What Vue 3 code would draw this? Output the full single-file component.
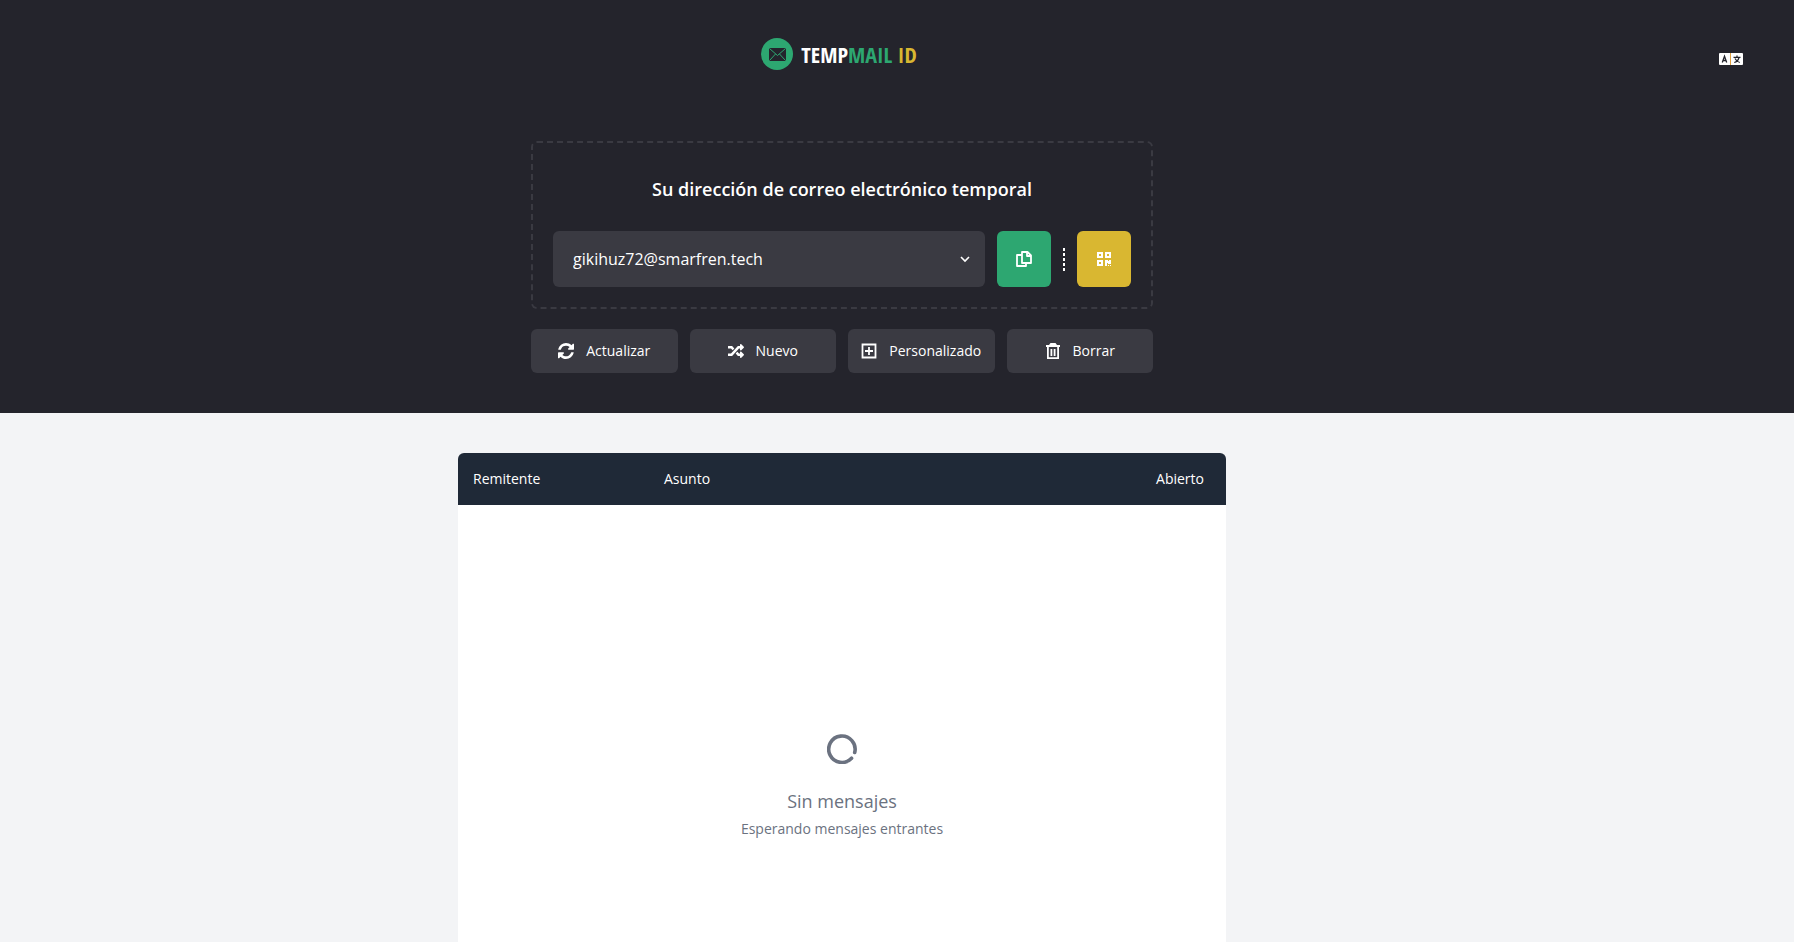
<template>
  <div class="page">
    <section class="hero">
      <header class="topbar">
        <a href="#" class="logo" aria-label="TEMPMAIL ID">
          <svg class="logo-mark" viewBox="0 0 32 32" aria-hidden="true">
            <circle cx="16" cy="16" r="16" fill="#2da771" />
            <rect x="8" y="10" width="17" height="13" rx="1" fill="#24242c" />
            <path d="M8.500 10.500l8 7 8-7M8.500 22.500l6-6.500M24.500 22.500l-6-6.500" fill="none" stroke="#2da771" stroke-width="1" />
          </svg>
          <span class="logo-text">TEMP<span class="green">MAIL</span> <span class="gold">ID</span></span>
        </a>
        <button class="lang" type="button" aria-label="Idioma">
          <svg viewBox="0 0 24 12" aria-hidden="true">
            <rect width="24" height="12" rx="1" fill="#fff" />
            <path d="M11.500 0v12" stroke="#e0a040" stroke-width="1" />
            <path d="M3.300 9.500L5.500 3.200l2.200 6.300M4 7.500h3" fill="none" stroke="#24242c" stroke-width="1.300" />
            <path d="M14.500 4.300h7M18 2.500v1.800M20 4.500c-.5 2.300-2.300 4.300-4.800 5M16 5.500c.8 1.800 2.400 3.300 4.800 4" fill="none" stroke="#24242c" stroke-width="1.200" />
          </svg>
        </button>
      </header>

      <div class="hero-body">
        <div class="address-box">
          <h1>Su dirección de correo electrónico temporal</h1>
          <div class="address-row">
            <div class="select-wrap">
              <select v-model="address" aria-label="Dirección de correo">
                <option v-for="item in addresses" :key="item" :value="item">{{ item }}</option>
              </select>
              <svg class="chevron" viewBox="0 0 10 10" aria-hidden="true">
                <path d="M1 3l4 4 4-4" fill="none" stroke="#fff" stroke-width="1.600" />
              </svg>
            </div>
            <button class="square copy" type="button" aria-label="Copiar">
              <svg viewBox="0 0 16 16" aria-hidden="true">
                <path d="M6 1h5.500L15 4.500V12H6zM11 1v4h4M5.500 4H1v11h9v-3" fill="none" stroke="#fff" stroke-width="1.800" stroke-linejoin="round" />
              </svg>
            </button>
            <span class="divider"></span>
            <button class="square qr" type="button" aria-label="Código QR">
              <svg viewBox="0 0 16 16" aria-hidden="true">
                <path fill="#fff" fill-rule="evenodd" d="M1 1h6v6H1zM3 3v2h2V3zM9 1h6v6H9zM11 3v2h2V3zM1 9h6v6H1zM3 11v2h2v-2zM9 9h3v1h1V9h2v4h-3v-1h-1v3H9zM12 14h1v1h-1zM14 14h1v1h-1z" />
              </svg>
            </button>
          </div>
        </div>

        <nav class="actions">
          <button v-for="action in actions" :key="action.label" type="button">
            <svg :viewBox="action.box" aria-hidden="true">
              <path v-if="action.fill" :d="action.fill" fill="#fff" />
              <path v-if="action.line" :d="action.line" fill="none" stroke="#fff" stroke-width="1.800" />
            </svg>
            <span>{{ action.label }}</span>
          </button>
        </nav>
      </div>
    </section>

    <main class="inbox">
      <table>
        <thead>
          <tr>
            <th class="sender">Remitente</th>
            <th>Asunto</th>
            <th class="open">Abierto</th>
          </tr>
        </thead>
        <tbody>
          <tr>
            <td colspan="3">
              <svg class="spinner" viewBox="0 0 30 30" aria-hidden="true">
                <path d="M24.600 24.200A13.200 13.200 0 1 1 27.700 18.500" fill="none" stroke="#6b7280" stroke-width="3.600" stroke-linecap="round" />
              </svg>
              <p class="empty-title">Sin mensajes</p>
              <p class="empty-text">Esperando mensajes entrantes</p>
            </td>
          </tr>
        </tbody>
      </table>
    </main>
  </div>
</template>

<script setup>
import { ref } from 'vue'

const addresses = ['gikihuz72@smarfren.tech']
const address = ref(addresses[0])

const actions = [
  {
    label: 'Actualizar',
    box: '0 0 1536 1536',
    fill: 'M1511 928q0 5-1 7-64 268-268 434.500T764 1536q-146 0-282.500-55T238 1324l-129 129q-19 19-45 19t-45-19-19-45V960q0-26 19-45t45-19h448q26 0 45 19t19 45-19 45l-137 137q71 66 161 102t187 36q134 0 250-65t186-179q11-17 53-117 8-23 30-23h192q13 0 22.500 9.500t9.500 22.500zM1536 128v448q0 26-19 45t-45 19h-448q-26 0-45-19t-19-45 19-45l138-138Q969 256 768 256q-134 0-250 65T332 500q-11 17-53 117-8 23-30 23H50q-13 0-22.500-9.500T18 608v-7q65-268 270-434.500T768 0q146 0 284 55.500T1297 212l130-129q19-19 45-19t45 19 19 45z'
  },
  {
    label: 'Nuevo',
    box: '0 0 512 512',
    fill: 'M504.971 359.029c9.373 9.373 9.373 24.569 0 33.941l-80 79.984c-15.010 15.010-40.971 4.490-40.971-16.971V416h-58.785a12.004 12.004 0 0 1-8.773-3.812l-70.556-75.596 53.333-57.143L352 336h32v-39.981c0-21.438 25.943-31.998 40.971-16.971l80 79.981zM12 176h84l52.781 56.551 53.333-57.143-70.556-75.596A11.999 11.999 0 0 0 122.785 96H12c-6.627 0-12 5.373-12 12v56c0 6.627 5.373 12 12 12zm372 0v39.984c0 21.460 25.961 31.980 40.971 16.971l80-79.984c9.373-9.373 9.373-24.569 0-33.941l-80-79.981C409.943 24.021 384 34.582 384 56.019V96h-58.785a12.004 12.004 0 0 0-8.773 3.812L96 336H12c-6.627 0-12 5.373-12 12v56c0 6.627 5.373 12 12 12h110.785c3.326 0 6.503-1.381 8.773-3.812L352 176h32z'
  },
  {
    label: 'Personalizado',
    box: '0 0 16 16',
    line: 'M1.500 1.500h13v13h-13zM8 4v8M4 8h8'
  },
  {
    label: 'Borrar',
    box: '0 0 16 16',
    fill: 'M1 2h14v2H1zM5.500 0h5L12 2H4z',
    line: 'M2.900 3v12.100h10.200V3M6.400 6v7M9.600 6v7'
  }
]
</script>

<style>
body {
  margin: 0;
  background: #f3f4f6;
}
</style>

<style scoped>
.page {
  display: flex;
  flex-direction: column;
  min-height: 100vh;
  font-family: "Open Sans", "Noto Sans", sans-serif;
  font-size: 14px;
  line-height: 20px;
}

button,
select {
  margin: 0;
  border: 0;
  font: inherit;
  color: #fff;
  cursor: pointer;
}

.hero {
  padding-bottom: 40px;
  background: #24242c;
}

.topbar {
  display: grid;
  grid-template-columns: 110px 1fr 110px;
  align-items: center;
  height: 108px;
  box-sizing: border-box;
}

.logo {
  grid-column: 2;
  justify-self: center;
  display: flex;
  align-items: center;
  gap: 8px;
  margin-right: 116px;
  color: #fff;
  text-decoration: none;
}

.logo-mark {
  width: 32px;
  height: 32px;
}

.logo-text {
  font-family: "Open Sans Condensed", "Roboto Condensed", "Liberation Sans Narrow", sans-serif;
  font-size: 22px;
  font-weight: 700;
  line-height: 32px;
  white-space: nowrap;
}

.green {
  color: #2da771;
}

.gold {
  color: #d9b731;
}

.lang {
  justify-self: center;
  display: flex;
  margin-top: 10px;
  margin-right: 16px;
  padding: 0;
  background: none;
}

.lang svg {
  width: 24px;
  height: 12px;
}

.hero-body {
  padding: 33px 126px 0 16px;
}

.address-box,
.actions {
  max-width: 622px;
  margin: 0 auto;
  box-sizing: border-box;
}

.address-box {
  padding: 32px 20px 20px;
  border: 2px dashed #3a3a42;
  border-radius: 6px;
}

h1 {
  margin: 0 0 28px;
  font-size: 18px;
  font-weight: 600;
  line-height: 28px;
  text-align: center;
  color: #fff;
}

.address-row {
  display: flex;
  align-items: center;
  gap: 12px;
}

.select-wrap {
  position: relative;
  flex: 1;
}

select {
  display: block;
  width: 100%;
  height: 56px;
  padding: 0 40px 0 20px;
  border-radius: 6px;
  background: #3a3a42;
  font-size: 16px;
  appearance: none;
}

.chevron {
  position: absolute;
  top: 23px;
  right: 15px;
  width: 10px;
  height: 10px;
  pointer-events: none;
}

.square {
  display: grid;
  place-items: center;
  width: 54px;
  height: 56px;
  padding: 0;
  border-radius: 6px;
}

.square svg {
  width: 16px;
  height: 16px;
}

.copy {
  background: #2da771;
}

.qr {
  background: #d9b731;
}

.divider {
  width: 2px;
  height: 23px;
  background: repeating-linear-gradient(#fff 0 3px, transparent 3px 5px);
}

.actions {
  display: grid;
  grid-template-columns: repeat(4, 1fr);
  gap: 12px;
  margin-top: 20px;
}

.actions button {
  display: flex;
  align-items: center;
  justify-content: center;
  gap: 12px;
  height: 44px;
  padding: 0;
  border-radius: 6px;
  background: #3a3a42;
}

.actions svg {
  width: 16px;
  height: 16px;
}

.inbox {
  display: flex;
  flex: 1;
  padding: 40px 126px 0 16px;
}

table {
  width: 100%;
  max-width: 768px;
  margin: 0 auto;
  border-collapse: collapse;
  table-layout: fixed;
}

thead tr {
  height: 52px;
}

th {
  padding: 0 16px;
  background: #1f2937;
  font-weight: 400;
  text-align: left;
  color: #fff;
}

th:first-child {
  border-top-left-radius: 6px;
}

th:last-child {
  border-top-right-radius: 6px;
}

.sender {
  width: 190px;
  padding-left: 15px;
  box-sizing: border-box;
}

.open {
  width: 20%;
  padding-right: 22px;
  text-align: right;
}

td {
  padding: 229px 16px 40px;
  background: #fff;
  text-align: center;
  vertical-align: top;
  color: #6b7280;
}

.spinner {
  display: block;
  width: 30px;
  height: 30px;
  margin: 0 auto 23px;
}

.empty-title {
  margin: 0;
  font-size: 18px;
  line-height: 28px;
}

.empty-text {
  margin: 4px 0 0;
}
</style>
